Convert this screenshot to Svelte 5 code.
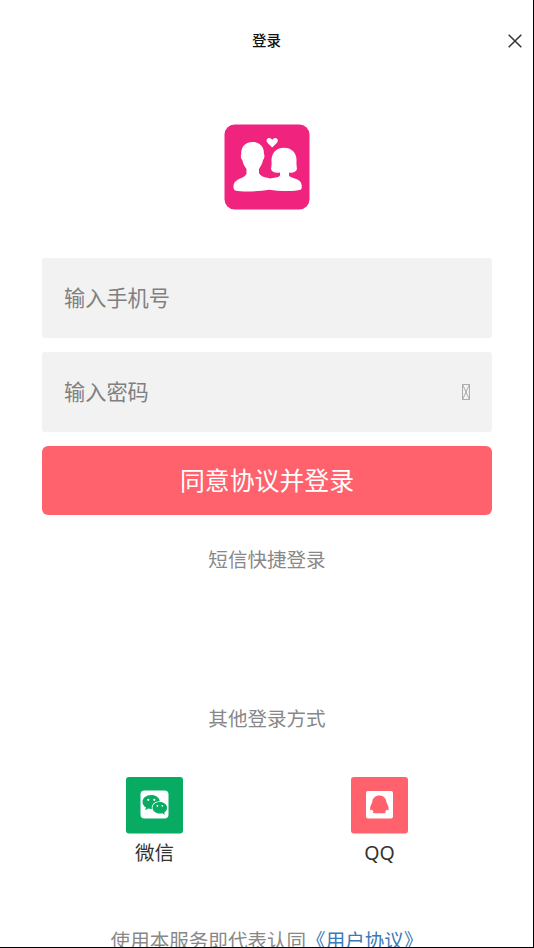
<script>
  let phone = $state('');
  let password = $state('');
</script>

<main class="page">
  <header>
    <h1>登录</h1>
    <button class="close" aria-label="关闭">
      <svg width="14" height="14" viewBox="0 0 14 14"><path d="M.7.7 13.3 13.3M13.3.7.7 13.3" stroke="#333" stroke-width="1.5" fill="none" /></svg>
    </button>
  </header>

  <svg class="logo" width="86" height="86" viewBox="0 0 86 86">
    <rect x=".5" y=".5" width="85" height="85" rx="10" fill="#f0247f" />
    <path fill="#fff" d="M28.500 18C35.500 18 40.300 22.800 40 30C40.800 31.500 40.500 34.500 39 36C38.400 40 36.500 42.500 35 45V49C37 53.500 43 53.500 46.500 54.500C49 53.500 54.500 54 56 51.500V48.500C51.500 49.500 47.500 48 47 45C47.500 42.500 47.700 40 47.500 36C47.500 28.500 53 23.800 60 23.800C67.500 23.800 73 29 72.500 37C72.300 40 72.700 42.500 73 45C72 48.300 68 49.500 65 48.500V51.500C67 54.500 74 54 76.500 58C78 60.500 78.200 64 77 65.500C70 67.800 55 67.200 45 65.700C36 67.200 20 68.400 11 66.500C9 65 9 61 10.500 58.500C13.500 54.500 20.500 54 22.500 50V45C20.500 42.500 19 39.500 18.300 36C16.700 34.500 16.500 31.500 17.300 30C16.700 23 21.500 18 28.500 18Z" />
    <path fill="#fff" d="M48.200 23.500 43.400 18.700C41.500 16.500 43 14 45.200 14C46.800 14 47.700 15 48.200 16C48.700 15 49.700 14 51.200 14C53.400 14 54.900 16.500 53 18.700Z" />
  </svg>

  <form onsubmit={(e) => e.preventDefault()}>
    <div class="field">
      <input type="text" placeholder="输入手机号" bind:value={phone} />
    </div>
    <div class="field">
      <input type="password" placeholder="输入密码" bind:value={password} />
      <svg class="eye" width="8" height="16" viewBox="0 0 8 16"><path d="M.5.5h7v15h-7zM.5.5l7 15M7.500.5l-7 15" stroke="#999" stroke-width=".8" fill="none" /></svg>
    </div>
    <button class="submit">同意协议并登录</button>
  </form>

  <div class="sms">短信快捷登录</div>
  <div class="others">其他登录方式</div>

  <div class="providers">
    <div class="provider">
      <svg width="57" height="57" viewBox="0 0 57 57">
        <rect width="57" height="56.500" rx="3" fill="#07ab62" />
        <rect x="14.500" y="13.500" width="28" height="28" rx="4" fill="#fff" />
        <path fill="#07ab62" d="M25.200 18c4.600 0 8.200 2.700 8.600 6.300-5 0-8.500 3-8 7.700-1.300.1-2.500-.1-3.600-.4l-3 1.600.8-2.700c-2.200-1.300-3.500-3.200-3.500-5.500 0-3.900 3.800-7 8.700-7Z" />
        <path fill="#07ab62" d="M33.800 25c4.100 0 7.300 2.600 7.300 5.800 0 1.900-1.100 3.500-2.800 4.600l.6 2.300-2.600-1.400c-.8.200-1.600.3-2.500.3-4.100 0-7.300-2.600-7.300-5.800s3.200-5.800 7.300-5.800Z" />
        <g fill="#fff"><circle cx="22.300" cy="22.800" r="1.100" /><circle cx="28.300" cy="22.800" r="1.100" /><circle cx="31.400" cy="28.800" r=".9" /><circle cx="36.300" cy="28.800" r=".9" /></g>
      </svg>
      <span>微信</span>
    </div>
    <div class="provider">
      <svg width="57" height="57" viewBox="0 0 57 57">
        <rect width="57" height="56.500" rx="3" fill="#ff626c" />
        <rect x="15" y="14" width="27" height="27.500" rx="2" fill="#fff" />
        <path fill="#ff626c" d="M28.300 18.500C32.300 18.500 35.300 21.200 35.500 25.500C37 28 38 30.700 37.500 33C37 33.700 36.200 33.300 35.500 32.500C35.300 33.500 34.900 34 34.200 34.500C35.500 35.500 34.500 36.300 32.500 36.300H24.200C22.200 36.300 21.200 35.500 22.500 34.500C21.800 34 21.400 33.500 21.200 32.500C20.500 33.300 19.700 33.700 19.200 33C18.700 30.700 19.700 28 21.200 25.500C21.400 21.200 24.300 18.500 28.300 18.500Z" />
      </svg>
      <span>QQ</span>
    </div>
  </div>

  <footer>使用本服务即代表认同<a href="#terms">《用户协议》</a></footer>
</main>

<style>
  .page {
    position: relative;
    width: 534px;
    height: 948px;
    overflow: hidden;
    display: flex;
    flex-direction: column;
    align-items: center;
    background: #fff;
    font-family: "Noto Sans", "Noto Sans CJK SC", sans-serif;
    font-size: 19.56px;
    color: #888;
  }
  /* frame line over the clipped footer text */
  .page::after {
    content: "";
    position: absolute;
    inset: 0;
    border-right: 1px solid #000;
    border-bottom: 1px solid #000;
    pointer-events: none;
  }
  header {
    width: 100%;
    height: 81px;
    flex: none;
    display: grid;
    grid-template-columns: 60px 1fr 60px;
    align-items: center;
  }
  h1 {
    grid-column: 2;
    margin: 0;
    padding: 0 1px 2px 0;
    text-align: center;
    font-size: 14.5px;
    line-height: 20px;
    font-weight: 500;
    color: #111;
  }
  button {
    border: 0;
    padding: 0;
    font-family: inherit;
  }
  .close {
    display: flex;
    justify-content: flex-end;
    padding-right: 12px;
    background: none;
  }
  .logo {
    flex: none;
    margin-top: 43px;
  }
  form {
    width: 450px;
    margin-top: 48px;
    display: flex;
    flex-direction: column;
    gap: 14px;
  }
  .field {
    box-sizing: border-box;
    height: 80px;
    padding: 0 22px;
    display: flex;
    align-items: center;
    background: #f2f2f2;
    border-radius: 3px;
  }
  input {
    flex: 1;
    min-width: 0;
    height: 40px;
    padding: 0 0 2px;
    box-sizing: border-box;
    border: 0;
    outline: 0;
    background: none;
    font-family: inherit;
    font-size: 21.2px;
    color: #333;
  }
  input::placeholder {
    color: #808080;
    opacity: 1;
  }
  .submit {
    height: 69px;
    border-radius: 6px;
    background: #ff626c;
    color: #fff;
    font-size: 24.9px;
    line-height: 69px;
  }
  .sms,
  .others,
  footer {
    flex: none;
    line-height: 30px;
    white-space: nowrap;
  }
  .sms {
    margin-top: 30px;
  }
  .others {
    margin-top: 129px;
  }
  .providers {
    width: 450px;
    margin-top: 43px;
    display: flex;
  }
  .provider {
    flex: 1;
    display: flex;
    flex-direction: column;
    align-items: center;
    color: #333;
  }
  .provider span {
    margin-top: 4px;
    line-height: 30px;
  }
  footer {
    margin-top: 58px;
  }
  a {
    color: #3a7ab8;
    text-decoration: none;
  }
</style>
